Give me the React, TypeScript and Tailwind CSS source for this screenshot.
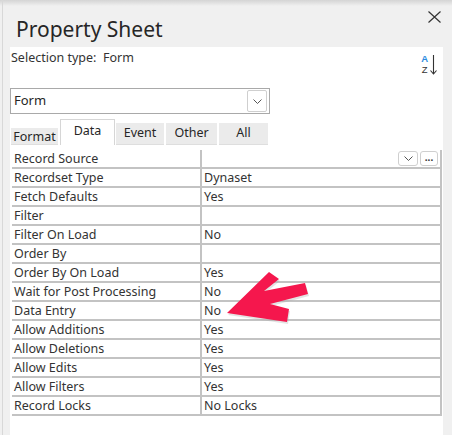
import React from 'react';

const ROWS: [string, string][] = [
  ['Record Source', ''],
  ['Recordset Type', 'Dynaset'],
  ['Fetch Defaults', 'Yes'],
  ['Filter', ''],
  ['Filter On Load', 'No'],
  ['Order By', ''],
  ['Order By On Load', 'Yes'],
  ['Wait for Post Processing', 'No'],
  ['Data Entry', 'No'],
  ['Allow Additions', 'Yes'],
  ['Allow Deletions', 'Yes'],
  ['Allow Edits', 'Yes'],
  ['Allow Filters', 'Yes'],
  ['Record Locks', 'No Locks'],
];

function Chevron() {
  return (
    <svg width="9" height="5" viewBox="0 0 9 5" fill="none">
      <path d="M0.5 0.5 L4.5 4.5 L8.5 0.5" stroke="#555" strokeWidth="1" />
    </svg>
  );
}

// sort A→Z button: letters stacked, arrow on the right
function SortIcon() {
  return (
    <div className="flex items-start gap-[2px]">
      <div className="flex flex-col items-center text-[9.5px]" style={{ fontFamily: '"Liberation Sans", sans-serif' }}>
        <span className="block h-[11px] leading-[11px] font-bold text-[#2b8be0]">A</span>
        <span className="block h-[11px] leading-[11px] text-[#333]">Z</span>
      </div>
      <svg className="mt-[2px]" width="7" height="20" viewBox="0 0 7 20" fill="none">
        <path d="M3.5 0 V19 M0.5 15.5 L3.5 19 L6.5 15.5" stroke="#333" strokeWidth="1.1" />
      </svg>
    </div>
  );
}

function Tabs() {
  const tab = 'h-[22px] bg-[#ebebeb] border-b border-[#dedede] flex items-center justify-center';
  return (
    <div className="mt-[5px] h-[26px] flex items-end text-[12.5px] text-[#262626]">
      <div className="ml-[1px] w-[47px] h-[17px] bg-[#ebebeb] border-b border-[#dedede] flex items-end justify-center leading-[15px]">
        Format
      </div>
      <div className="ml-[2px] w-[55px] h-[26px] bg-white border border-b-0 border-[#d6d6d6] flex items-center justify-center pb-[2px]">
        Data
      </div>
      <div className={`ml-[1px] w-[48px] ${tab}`}>Event</div>
      <div className={`ml-[2px] w-[51px] ${tab}`}>Other</div>
      <div className={`ml-[2px] w-[49px] ${tab}`}>All</div>
    </div>
  );
}

export default function App() {
  return (
    <div
      className="relative w-[452px] h-[435px] overflow-hidden bg-[#f0f0f0] bg-[linear-gradient(#d4d4d4,#f0f0f0_6px)] text-[#262626]"
      style={{ fontFamily: '"Noto Sans", "Open Sans", sans-serif' }}
    >
      <div className="ml-[2px] h-full border-l border-[#d8d8d8] flex flex-col">
        {/* header */}
        <div className="h-[47px] flex items-start">
          <div className="ml-[13px] pt-[15px] text-[21px] leading-[28px] text-[#262626]">Property Sheet</div>
          <svg className="ml-auto mt-[11px] mr-[11px]" width="13" height="12" viewBox="0 0 13 12" fill="none">
            <path d="M0.5 0.5 L12.5 11.5 M12.5 0.5 L0.5 11.5" stroke="#333" strokeWidth="1.2" />
          </svg>
        </div>

        {/* white panel */}
        <div className="ml-[7px] w-[433px] flex-1 bg-white flex flex-col">
          <div className="h-[41px] flex justify-between">
            <div className="pl-[1px] pt-[3px] text-[12.5px] leading-[15px] text-[#333] whitespace-pre">Selection type:  Form</div>
            <div className="mt-[6px] mr-[6px]">
              <SortIcon />
            </div>
          </div>

          <div className="w-[260px] h-[26px] border border-[#a9a9a9] flex items-center">
            <span className="pl-[3px] text-[13px] text-[#262626]">Form</span>
            <div className="ml-auto mr-[2px] w-[20px] h-[22px] border border-[#cfcfcf] rounded-[2px] flex items-center justify-center">
              <Chevron />
            </div>
          </div>

          <Tabs />

          <div className="mt-[5px] ml-[2px] w-[430px] border-r-2 border-[#c3c3c3] text-[12.5px] text-[#333]">
            {ROWS.map(([label, value], i) => (
              <div key={label} className="h-[19px] flex border-b-2 border-[#c3c3c3]">
                <div className="w-[188px] pl-[2px] leading-[17px] whitespace-nowrap">{label}</div>
                <div className="flex-1 border-l-2 border-[#c3c3c3] pl-[2px] leading-[17px] flex items-center">
                  <span>{value}</span>
                  {i === 0 && (
                    <div className="ml-auto mr-[2px] flex gap-[2px]">
                      <div className="w-[20px] h-[15px] border border-[#cfcfcf] rounded-[3px] flex items-center justify-center">
                        <Chevron />
                      </div>
                      <div className="w-[18px] h-[15px] border border-[#cfcfcf] rounded-[3px] flex items-center justify-center text-[10px] font-bold leading-none pb-[3px]">
                        ...
                      </div>
                    </div>
                  )}
                </div>
              </div>
            ))}
          </div>
        </div>
      </div>

      {/* annotation arrow */}
      <svg className="absolute left-0 top-0 pointer-events-none" width="452" height="435" viewBox="0 0 452 435">
        <polygon
          points="227,313 269,272 279,279 264,291 305,283 308,294 270,304 289,309 287,322"
          fill="#b0b0b0"
          opacity="0.35"
          transform="translate(1,2)"
        />
        <polygon
          points="227,313 269,272 279,279 264,291 305,283 308,294 270,304 289,309 287,322"
          fill="#f5174d"
        />
      </svg>
    </div>
  );
}
